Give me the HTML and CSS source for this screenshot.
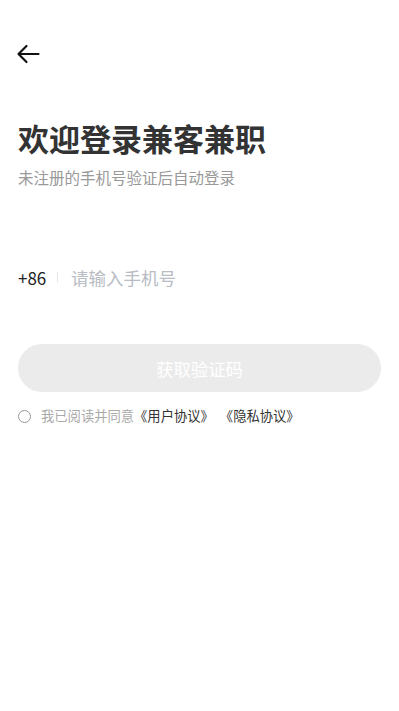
FILE: index.html
```html
<!DOCTYPE html>
<html lang="zh">
<head>
<meta charset="utf-8">
<link rel="stylesheet" href="styles.css">
</head>
<body>
<div class="page">
  <div class="nav">
    <svg class="back" width="24" height="20" viewBox="0 0 24 20"><path d="M22.5 10H2.5M10.5 2L2.5 10L10.5 18" fill="none" stroke="#111" stroke-width="2.2" stroke-linecap="round" stroke-linejoin="round"/></svg>
  </div>
  <h1 class="title">欢迎登录兼客兼职</h1>
  <p class="sub">未注册的手机号验证后自动登录</p>
  <div class="phone">
    <span class="code">+86</span>
    <span class="divider"></span>
    <span class="placeholder">请输入手机号</span>
  </div>
  <div class="btn">获取验证码</div>
  <div class="agree">
    <span class="radio"></span>
    <span class="gray">我已阅读并同意</span><span class="link">《用户协议》</span><span class="link sp">《隐私协议》</span>
  </div>
</div>
</body>
</html>
```
FILE: styles.css
```css
* { box-sizing: border-box; }
body { margin: 0; background: #fff; font-family: "Noto Sans CJK SC", "Noto Sans", sans-serif; }
.page { padding: 0 18px; }
.nav { height: 116px; padding-top: 44px; }
.back { display: block; margin-left: -2px; }
.title { margin: 0; font-size: 31px; font-weight: 700; color: #333; line-height: 44px; letter-spacing: 0; }
.sub { margin: 5px 0 0; font-size: 15.5px; color: #999; line-height: 24px; }
.phone { display: flex; align-items: center; margin-top: 75px; height: 26px; }
.code { font-size: 17px; color: #222; width: 39px; }
.divider { width: 1px; height: 10px; background: #e5e5e5; margin-right: 13px; }
.placeholder { font-size: 17.5px; color: #b8bcc4; }
.btn { margin-top: 54px; height: 48px; border-radius: 24px; background: #ebebeb; color: #fff; font-size: 17.4px; display: flex; align-items: center; justify-content: center; }
.agree { display: flex; align-items: center; margin-top: 15px; font-size: 13.3px; line-height: 18px; }
.radio { width: 13px; height: 13px; border: 1.2px solid #999; border-radius: 50%; margin-right: 10px; }
.gray { color: #aaa; }
.link { color: #333; }
.sp { margin-left: 6px; }
```
